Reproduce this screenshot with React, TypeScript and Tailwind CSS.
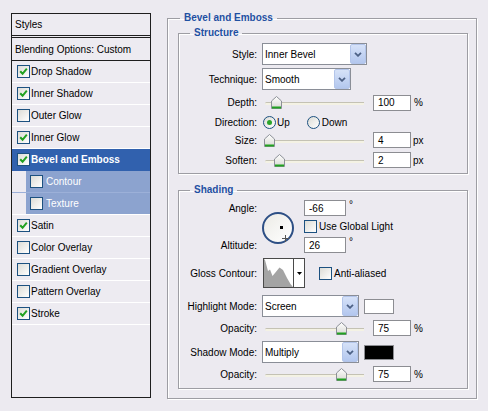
import React from "react";

const EFFECTS = [
  { label: "Drop Shadow", checked: true },
  { label: "Inner Shadow", checked: true },
  { label: "Outer Glow", checked: false },
  { label: "Inner Glow", checked: true },
  { label: "Bevel and Emboss", checked: true, active: true },
  { label: "Contour", checked: false, sub: true },
  { label: "Texture", checked: false, sub: true },
  { label: "Satin", checked: true },
  { label: "Color Overlay", checked: false },
  { label: "Gradient Overlay", checked: false },
  { label: "Pattern Overlay", checked: false },
  { label: "Stroke", checked: true },
];

function Check({ checked }: { checked?: boolean }) {
  return (
    <span className="flex size-[13px] shrink-0 items-center justify-center border border-[#1c5180] bg-gradient-to-br from-[#dcdcd6] to-white">
      {checked && (
        <svg width="9" height="9" viewBox="0 0 9 9">
          <path d="M1.2 4.2 L3.6 6.8 L7.8 1.6" fill="none" stroke="#21a121" strokeWidth="2" />
        </svg>
      )}
    </span>
  );
}

function Radio({ on }: { on?: boolean }) {
  return (
    <span className="flex size-[13px] shrink-0 items-center justify-center rounded-full border border-[#1c5180] bg-gradient-to-br from-[#dcdcd6] to-white">
      {on && <span className="size-[5px] rounded-full bg-[#2ba52b]" />}
    </span>
  );
}

function Select({ value, className }: { value: string; className: string }) {
  return (
    <div className={`flex h-[22px] items-stretch border border-[#8a8e97] bg-white ${className}`}>
      <span className="flex flex-1 items-center pl-[2px]">{value}</span>
      <span className="flex w-[16px] items-center justify-center rounded-[2px] border border-[#b3c5ea] bg-gradient-to-b from-[#d6e2f8] to-[#b3c7ee]">
        <svg width="8" height="5" viewBox="0 0 8 5">
          <path d="M1 0.8 L4 3.8 L7 0.8" fill="none" stroke="#4d6185" strokeWidth="1.8" />
        </svg>
      </span>
    </div>
  );
}

function Field({ value, wide }: { value: string; wide?: boolean }) {
  return (
    <span
      className={`flex h-[16px] shrink-0 items-center border border-[#8c8d92] bg-white pl-[4px] ${
        wide ? "w-[38px]" : "w-[42px]"
      }`}
    >
      {value}
    </span>
  );
}

function Slider({ pos }: { pos: number }) {
  return (
    <div className="relative h-[17px] w-[105px] shrink-0">
      <div className="absolute left-[3px] right-[3px] top-[8px] h-[3px] rounded-l-full border-t border-[#c4c2b4] bg-[#f4f2e4]" />
      <svg
        className="absolute top-[2px]"
        style={{ left: pos - 5 }}
        width="11"
        height="13"
        viewBox="0 0 11 13"
      >
        <defs>
          <linearGradient id="thumb" x1="0" y1="0" x2="0" y2="1">
            <stop offset="0" stopColor="#ffffff" />
            <stop offset="1" stopColor="#d8d8d2" />
          </linearGradient>
        </defs>
        <path d="M5.5 0.5 L10.5 5 L10.5 12.5 L0.5 12.5 L0.5 5 Z" fill="url(#thumb)" stroke="#8c9097" />
        <rect x="1" y="10.5" width="9" height="2" fill="#21a121" />
      </svg>
    </div>
  );
}

function Row({ label, children, className = "" }: { label: string; children: React.ReactNode; className?: string }) {
  return (
    <div className={`flex items-center ${className}`}>
      <span className="w-[78px] shrink-0 text-right">{label}</span>
      <div className="ml-[5px] flex items-center">{children}</div>
    </div>
  );
}

function Legend({ children, offset }: { children: React.ReactNode; offset: string }) {
  return <legend className={`${offset} px-[4px] text-[10px] font-bold leading-[14px] text-[#1f50a2]`}>{children}</legend>;
}

function ContourPreview() {
  return (
    <div className="flex h-[30px] items-stretch border border-[#4a4a4a] bg-white">
      <svg width="29" height="28" viewBox="0 0 29 28">
        <path
          d="M0 0 L1 1 L4 12 L6 10.5 L8.5 17 L11 14 L15.5 8.5 L19 11 L23 19 L26.5 25 L29 28 L0 28 Z"
          fill="#a4a4a4"
        />
      </svg>
      <span className="flex w-[11px] items-center justify-center border-l border-[#4a4a4a]">
        <svg width="5" height="3" viewBox="0 0 5 3">
          <path d="M0 0 L5 0 L2.5 3 Z" fill="#000" />
        </svg>
      </span>
    </div>
  );
}

export default function App() {
  return (
    <div className="flex h-[411px] w-[488px] items-start gap-[16px] bg-[#eceaf0] pl-[11px] pt-[11px] font-['Liberation_Sans',Arial,sans-serif] text-[10px] text-black">
      <div className="mt-[2px] flex h-[385px] w-[140px] shrink-0 flex-col border border-[#1e1e1e] bg-[#edebf1]">
        <div className="flex h-[24px] items-center border-b-[3px] border-double border-[#1e1e1e] px-[3px]">Styles</div>
        <div className="flex h-[23px] items-center border-b border-[#1e1e1e] px-[3px]">Blending Options: Custom</div>
        {EFFECTS.map((fx) => (
          <div
            key={fx.label}
            className={`flex h-[22px] border-b ${
              fx.active ? "border-[#3161ae]" : fx.label === "Contour" ? "border-[#9cb0d8]" : "border-white"
            }`}
          >
            <div
              className={`flex flex-1 items-center ${
                fx.active
                  ? "bg-[#3161ae] pl-[5px] font-bold text-white"
                  : fx.sub
                    ? "ml-[14px] bg-[#8ca3cf] pl-[4px] text-white"
                    : "pl-[5px]"
              }`}
            >
              <Check checked={fx.checked} />
              <span className={fx.sub ? "ml-[3px]" : "ml-[1px]"}>{fx.label}</span>
            </div>
          </div>
        ))}
      </div>

      <fieldset className="w-[310px] border border-[#9d9da3] pb-[9px] pl-[10px] pr-[8px] shadow-[1px_1px_0_#fff,inset_1px_1px_0_#fff]">
        <Legend offset="ml-[2px]">Bevel and Emboss</Legend>

        <fieldset className="mt-[1px] border border-[#9d9da3] pb-[5px] pt-[3px] shadow-[1px_1px_0_#fff,inset_1px_1px_0_#fff]">
          <Legend offset="ml-[11px]">Structure</Legend>
          <Row label="Style:">
            <Select value="Inner Bevel" className="w-[105px]" />
          </Row>
          <Row label="Technique:" className="mt-[3px]">
            <Select value="Smooth" className="w-[89px]" />
          </Row>
          <Row label="Depth:" className="mt-[4px] h-[17px]">
            <Slider pos={14} />
            <span className="ml-[6px]">
              <Field value="100" wide />
            </span>
            <span className="ml-[3px]">%</span>
          </Row>
          <Row label="Direction:" className="mt-[2px] h-[18px]">
            <span className="ml-[1px] flex items-center gap-[1px]">
              <Radio on />
              <span>Up</span>
            </span>
            <span className="ml-[17px] flex items-center gap-[2px]">
              <Radio />
              <span>Down</span>
            </span>
          </Row>
          <Row label="Size:" className="mt-[1px] h-[16px]">
            <Slider pos={7} />
            <span className="ml-[6px]">
              <Field value="4" wide />
            </span>
            <span className="ml-[2px]">px</span>
          </Row>
          <Row label="Soften:" className="mt-[4px] h-[16px]">
            <Slider pos={17} />
            <span className="ml-[6px]">
              <Field value="2" wide />
            </span>
            <span className="ml-[2px]">px</span>
          </Row>
        </fieldset>

        <fieldset className="mt-[9px] border border-[#9d9da3] pb-[6px] pt-[3px] shadow-[1px_1px_0_#fff,inset_1px_1px_0_#fff]">
          <Legend offset="ml-[11px]">Shading</Legend>
          <div className="grid grid-cols-[78px_47px_1fr] grid-rows-[16px_21px_16px]">
            <span className="col-start-1 row-start-1 flex items-center justify-end">Angle:</span>
            <div className="relative col-start-2 row-span-3 row-start-1 ml-[5px] mt-[12px] size-[32px] rounded-full border-2 border-[#2d4f85] bg-gradient-to-br from-[#ecebe6] to-white">
              <span className="absolute left-[16px] top-[12px] size-[3px] bg-black" />
              <svg className="absolute left-[18px] top-[21px]" width="7" height="7" viewBox="0 0 7 7">
                <path d="M3.5 0 V7 M0 3.5 H7" stroke="#555" strokeWidth="1" />
              </svg>
            </div>
            <span className="col-start-3 row-start-1 flex items-center">
              <Field value="-66" />
              <span className="ml-[3px] self-start leading-[10px]">°</span>
            </span>
            <span className="col-start-3 row-start-2 flex items-center gap-[2px]">
              <Check />
              <span>Use Global Light</span>
            </span>
            <span className="col-start-1 row-start-3 flex items-center justify-end">Altitude:</span>
            <span className="col-start-3 row-start-3 flex items-center">
              <Field value="26" />
              <span className="ml-[3px] self-start leading-[10px]">°</span>
            </span>
          </div>
          <Row label="Gloss Contour:" className="mt-[5px] h-[30px]">
            <span className="ml-[1px]">
              <ContourPreview />
            </span>
            <span className="ml-[14px] flex items-center gap-[2px]">
              <Check />
              <span>Anti-aliased</span>
            </span>
          </Row>
          <Row label="Highlight Mode:" className="mt-[7px]">
            <Select value="Screen" className="w-[97px]" />
            <span className="ml-[5px] h-[15px] w-[30px] border border-[#8c8d92] bg-white" />
          </Row>
          <Row label="Opacity:" className="mt-[3px] h-[16px]">
            <Slider pos={79} />
            <span className="ml-[6px]">
              <Field value="75" wide />
            </span>
            <span className="ml-[3px]">%</span>
          </Row>
          <Row label="Shadow Mode:" className="mt-[5px]">
            <Select value="Multiply" className="w-[97px]" />
            <span className="ml-[5px] h-[15px] w-[30px] border border-[#8c8d92] bg-black" />
          </Row>
          <Row label="Opacity:" className="mt-[3px] h-[16px]">
            <Slider pos={79} />
            <span className="ml-[6px]">
              <Field value="75" wide />
            </span>
            <span className="ml-[3px]">%</span>
          </Row>
        </fieldset>
      </fieldset>
    </div>
  );
}
